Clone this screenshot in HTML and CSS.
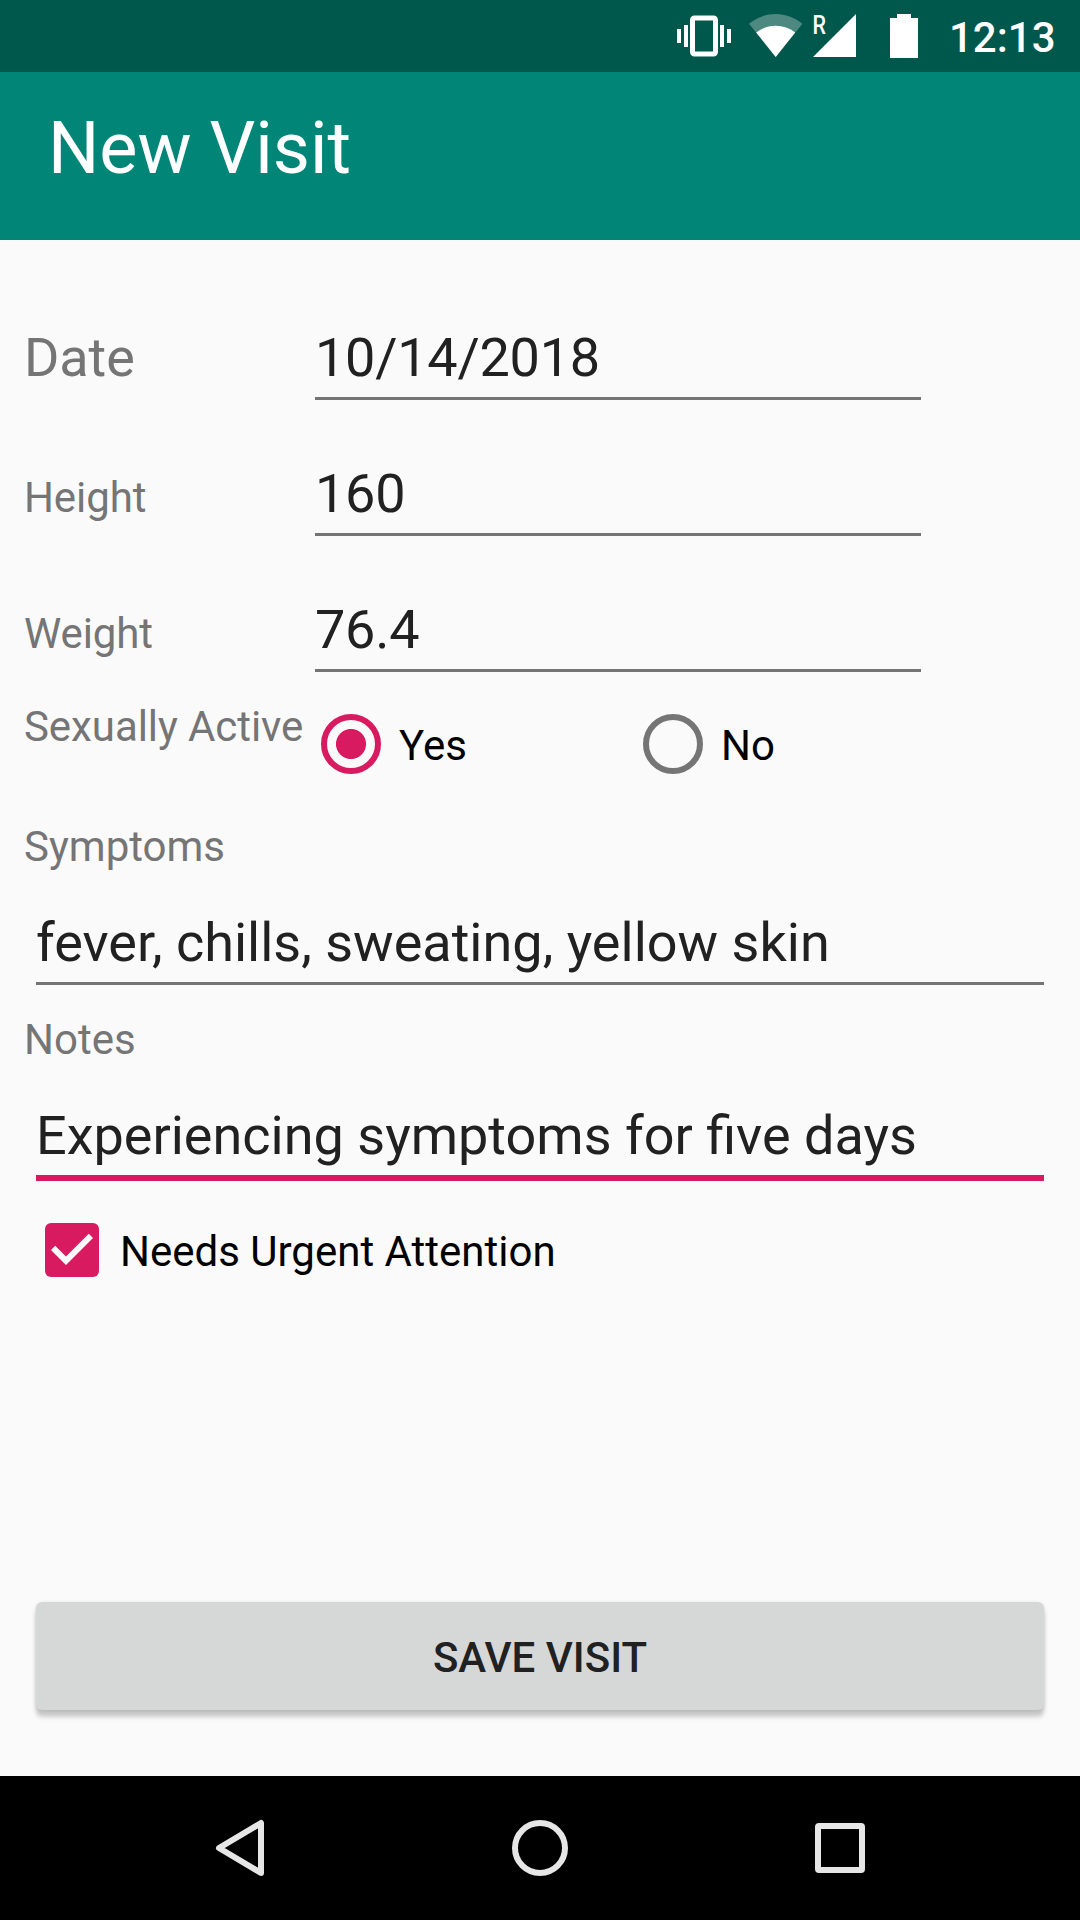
FILE: index.html
```html
<!DOCTYPE html>
<html lang="en">
<head>
<meta charset="utf-8">
<title>New Visit</title>
<link rel="stylesheet" href="styles.css">
</head>
<body>
<div class="screen">
  <div class="status-bar">
    <svg class="icon-vibrate" width="56" height="44" viewBox="676 14 56 44">
      <path fill="#fff" d="M677 29h4v14h-4zM684 25h4v22h-4zM720 25h4v22h-4zM727 29h4v14h-4z"/>
      <rect x="692.5" y="18" width="23" height="36" rx="2" fill="none" stroke="#fff" stroke-width="5"/>
    </svg>
    <svg class="icon-wifi" width="54" height="44" viewBox="749 14 54 44">
      <path fill="#fff" fill-opacity=".3" d="M775.7 57L749 23.7C757 17.5 766 14 775.7 14S794.5 17.5 802.4 23.7z"/>
      <path fill="#fff" d="M775.7 57L756.2 32.5C762 28 768.5 25.7 775.7 25.7S789.5 28 795.2 32.5z"/>
    </svg>
    <svg class="icon-signal" width="48" height="64" viewBox="809 4 48 64">
      <path fill="#fff" d="M813 57h43V14z"/>
      <text class="roaming" x="812.5" y="33.5" textLength="13.5" lengthAdjust="spacingAndGlyphs">R</text>
    </svg>
    <svg class="icon-battery" width="28" height="44" viewBox="890 14 28 44">
      <path fill="#fff" d="M897 14h14v4h7v40h-28V18h7z"/>
    </svg>
    <span class="clock">12:13</span>
  </div>

  <header class="app-bar"><h1 class="title">New Visit</h1></header>

  <main class="form">
    <div class="row">
      <span class="label label-large">Date</span>
      <span class="field">10/14/2018</span>
    </div>
    <div class="row">
      <span class="label">Height</span>
      <span class="field">160</span>
    </div>
    <div class="row">
      <span class="label">Weight</span>
      <span class="field">76.4</span>
    </div>
    <div class="choice-row">
      <span class="label">Sexually Active</span>
      <div class="option"><span class="radio radio-on"></span><span>Yes</span></div>
      <div class="option"><span class="radio"></span><span>No</span></div>
    </div>
    <span class="label block-label">Symptoms</span>
    <div class="field field-wide">fever, chills, sweating, yellow skin</div>
    <span class="label block-label notes-label">Notes</span>
    <div class="field field-wide field-focused">Experiencing symptoms for five days</div>
    <div class="check-row">
      <svg width="54" height="54" viewBox="3 3 18 18">
        <rect x="3" y="3" width="18" height="18" rx="2" fill="#d81b60"/>
        <path fill="#fafafa" d="M10 17l-5-5 1.41-1.41L10 14.17l7.59-7.59L19 8z"/>
      </svg>
      <span>Needs Urgent Attention</span>
    </div>
    <button class="save" type="button">SAVE VISIT</button>
  </main>

  <nav class="nav-bar">
    <svg width="60" height="60" viewBox="0 0 60 60"><path d="M51 5V55L9 30z" class="nav-line"/></svg>
    <svg width="60" height="60" viewBox="0 0 60 60"><circle cx="30" cy="30" r="25" class="nav-line"/></svg>
    <svg width="60" height="60" viewBox="0 0 60 60"><rect x="8" y="8" width="44" height="44" rx="1" class="nav-line"/></svg>
  </nav>
</div>
</body>
</html>
```
FILE: styles.css
```css
* { box-sizing: border-box; }

body {
  margin: 0;
  font-family: Roboto, "Liberation Sans", sans-serif;
  font-size: 42px;
  line-height: 49px;
  color: #000;
}

svg { display: block; flex: none; }

.screen {
  width: 1080px;
  height: 1920px;
  display: flex;
  flex-direction: column;
  background: #fafafa;
  overflow: hidden;
}

/* System status bar */
.status-bar {
  height: 72px;
  display: flex;
  justify-content: flex-end;
  align-items: center;
  padding-right: 24px;
  background: #00574b;
}
.icon-wifi { margin-left: 17px; }
.icon-signal { margin-left: 6px; }
.icon-battery { margin-left: 33px; }
.roaming { font-size: 25px; font-weight: 500; fill: #fff; }
.clock {
  width: 107px;
  margin-left: 31px;
  padding-top: 2px;
  font-weight: 500;
  color: #fff;
  white-space: nowrap;
}

.app-bar {
  height: 168px;
  padding: 35px 48px 0;
  background: #008577;
}
.title {
  margin: 0;
  font-size: 72px;
  line-height: 84px;
  font-weight: 400;
  color: #fff;
}

/* Visit form */
.form {
  flex: 1;
  display: flex;
  flex-direction: column;
  padding: 24px 24px 66px;
}
.row {
  height: 136px;
  display: flex;
  align-items: flex-end;
}
.row .field { width: 606px; letter-spacing: -.25px; }
.row .label { width: 291px; padding-bottom: 14px; letter-spacing: -.1px; }
.label { color: #757575; white-space: nowrap; }
.row .label-large { font-size: 54px; line-height: 64px; padding-bottom: 10px; }

.field {
  height: 74px;
  padding-bottom: 7px;
  border-bottom: 3px solid #757575;
  font-size: 54px;
  line-height: 64px;
  color: #212121;
  white-space: nowrap;
}
.field-wide { margin: 40px 12px 0; }
.field-focused {
  height: 77px;
  border-bottom: 6px solid #d81b60;
}

.choice-row {
  height: 108px;
  display: flex;
  padding-top: 30px;
}
.choice-row .label { width: 297px; letter-spacing: -.08px; }
.option {
  width: 322px;
  height: 60px;
  margin-top: 12px;
  display: flex;
  gap: 18px;
}
.option span:last-child { padding-top: 7px; }
.radio {
  width: 60px;
  height: 60px;
  border: 6px solid #757575;
  border-radius: 50%;
}
.radio-on {
  border-color: #d81b60;
  background: radial-gradient(circle closest-side, #d81b60 14.6px, transparent 15.4px);
}

.block-label { margin-top: 42px; }
.notes-label { margin-top: 30px; }

.check-row {
  display: flex;
  gap: 21px;
  margin: 42px 21px 0;
  height: 54px;
}
.check-row span { padding-top: 4px; }

.save {
  height: 108px;
  margin: auto 12px 0;
  padding: 2px 0 0;
  border: 0;
  border-radius: 6px;
  background: #d6d7d7;
  box-shadow: 0 7px 4px rgba(0, 0, 0, .19), 0 1px 4px rgba(0, 0, 0, .12);
  font: 500 42px/49px Roboto, "Liberation Sans", sans-serif;
  color: #212121;
}

/* System navigation */
.nav-bar {
  height: 144px;
  display: flex;
  justify-content: center;
  align-items: center;
  gap: 240px;
  background: #000;
}
.nav-line {
  fill: none;
  stroke: #e6e6e6;
  stroke-width: 6;
  stroke-linejoin: round;
}
```
